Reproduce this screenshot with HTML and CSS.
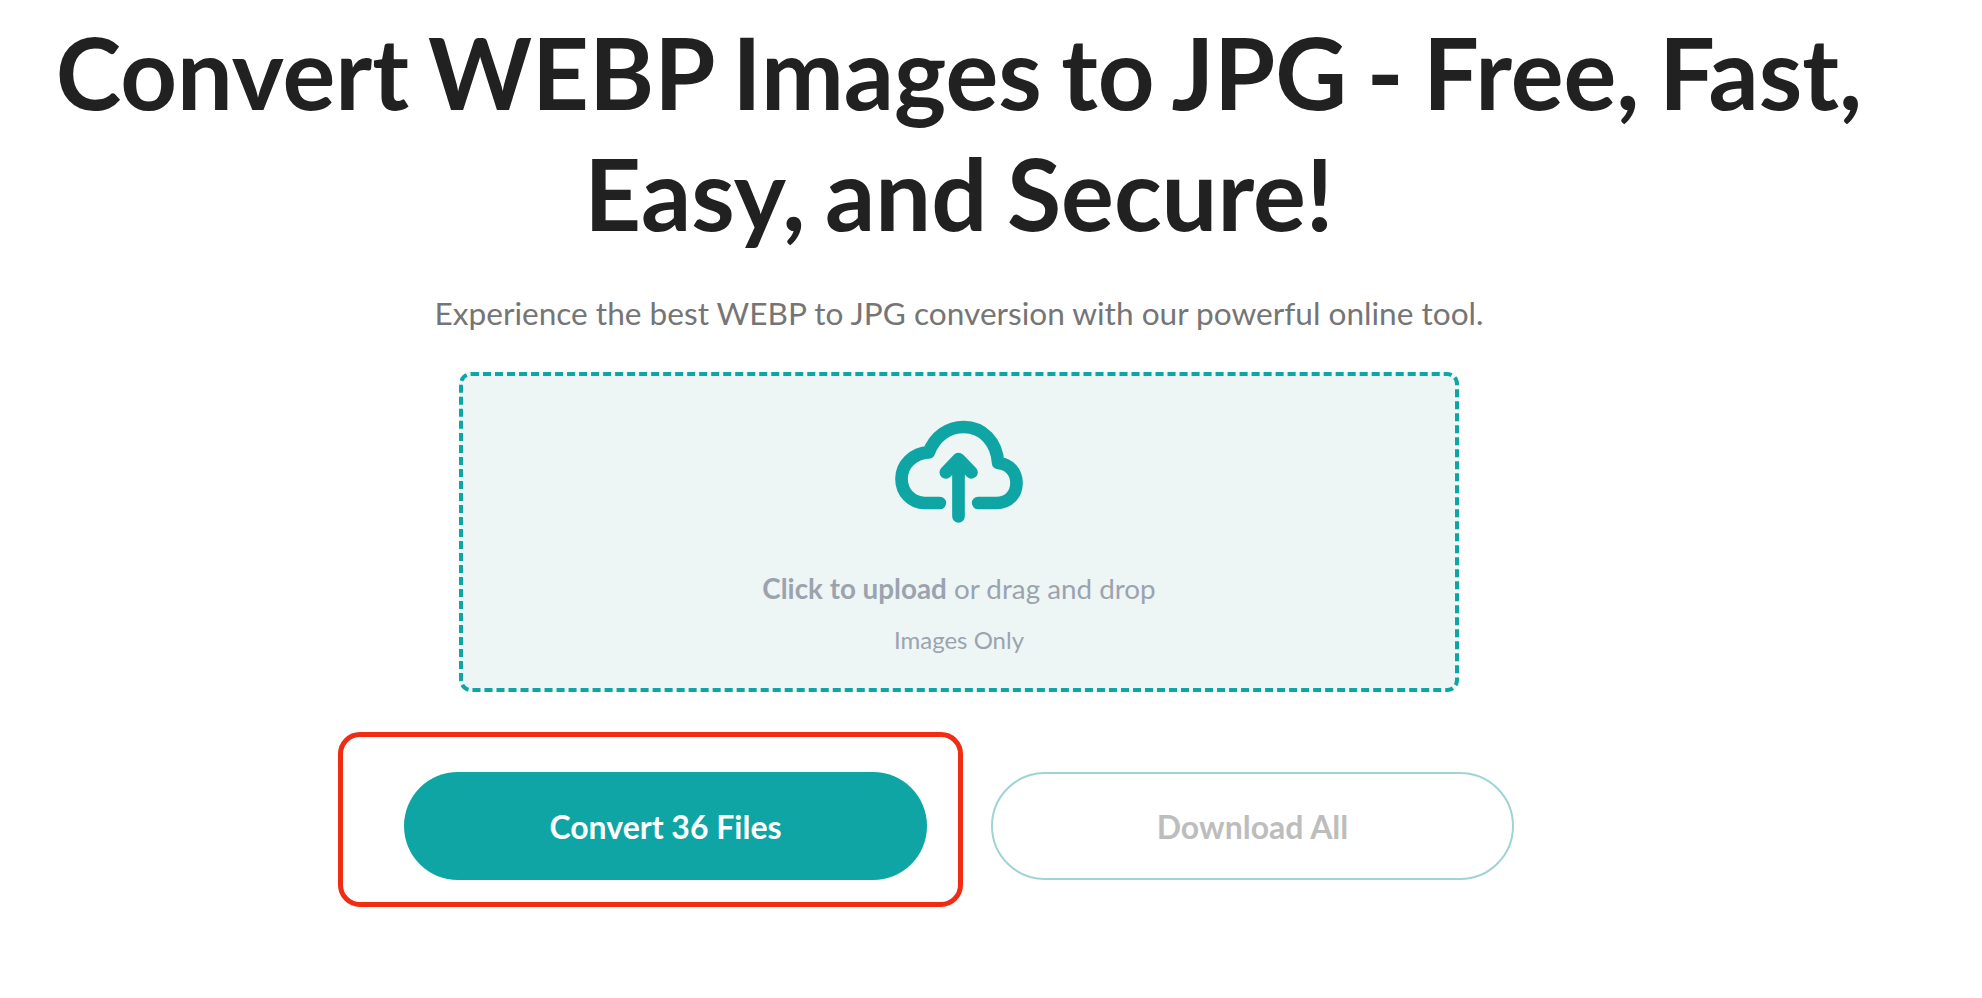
FILE: index.html
```html
<!DOCTYPE html>
<html lang="en">

<head>
    <meta charset="UTF-8">
    <title>Convert WEBP to JPG</title>
    <link rel="stylesheet" href="styles.css">
</head>

<body>
    <main class="converter">
        <h1>Convert WEBP Images to JPG - Free, Fast, Easy, and Secure!</h1>
        <p class="intro">Experience the best WEBP to JPG conversion with our powerful online tool.</p>

        <label class="dropzone">
            <svg class="cloud" viewBox="100 58 395 315" aria-hidden="true">
                <path d="M240 310 H195 C155 310 125 278 125 237 C125 195 160 160 207 158 C225 110 265 82 312 82 C368 82 410 125 415 190 C448 192 470 218 470 250 C470 285 445 310 410 310 H355" />
                <path d="M296 350 V180 M258 218 L296 178 L335 218" />
            </svg>
            <span class="upload"><b>Click to upload</b> or drag and drop</span>
            <span class="hint">Images Only</span>
        </label>

        <div class="actions">
            <div class="convert-wrap">
                <button class="btn convert">Convert 36 Files</button>
                <span class="highlight"></span>
            </div>
            <button class="btn download">Download All</button>
        </div>
    </main>
</body>

</html>
```

FILE: styles.css
```css
* {
    box-sizing: border-box;
}

body {
    margin: 0;
    background-color: #fff;
    font-family: Lato, "Liberation Sans", sans-serif;
}

.converter {
    display: flex;
    flex-direction: column;
    align-items: center;
    width: 1918px;
    min-height: 998px;
    padding-top: 11px;
}

h1 {
    margin: 0;
    width: 1880px;
    font-size: 99px;
    line-height: 121px;
    font-weight: 700;
    word-spacing: -4.5px;
    text-align: center;
    color: #212121;
}

.intro {
    margin: 40px 0 0;
    font-size: 31.6px;
    line-height: 40px;
    color: #757575;
}

.dropzone {
    display: flex;
    flex-direction: column;
    align-items: center;
    width: 1000px;
    height: 320px;
    margin-top: 39px;
    padding-top: 43px;
    border: 4px dashed #0ea5a4;
    border-radius: 12px;
    background-color: #edf6f5;
}

.cloud {
    width: 132px;
    height: 105px;
    fill: none;
    stroke: #0ea5a4;
    stroke-width: 38;
    stroke-linecap: round;
    stroke-linejoin: round;
}

.upload {
    margin-top: 47px;
    font-size: 27.8px;
    line-height: 36px;
    color: #9ca3af;
}

.hint {
    margin-top: 16.5px;
    font-size: 24px;
    line-height: 32px;
    color: #9ca3af;
}

.actions {
    display: flex;
    gap: 64px;
    margin-top: 80px;
}

.convert-wrap {
    position: relative;
}

.btn {
    display: block;
    width: 523px;
    height: 108px;
    border-radius: 54px;
    font-family: inherit;
    font-size: 32px;
    font-weight: 700;
    background: none;
}

.convert {
    border: none;
    background-color: #0ea5a4;
    color: #fff;
}

.download {
    border: 2px solid #9fd4d3;
    color: #bdbdbd;
}

.highlight {
    position: absolute;
    top: -40px;
    left: -66px;
    width: 625px;
    height: 175px;
    border: 5px solid #f02d12;
    border-radius: 22px;
}
```
